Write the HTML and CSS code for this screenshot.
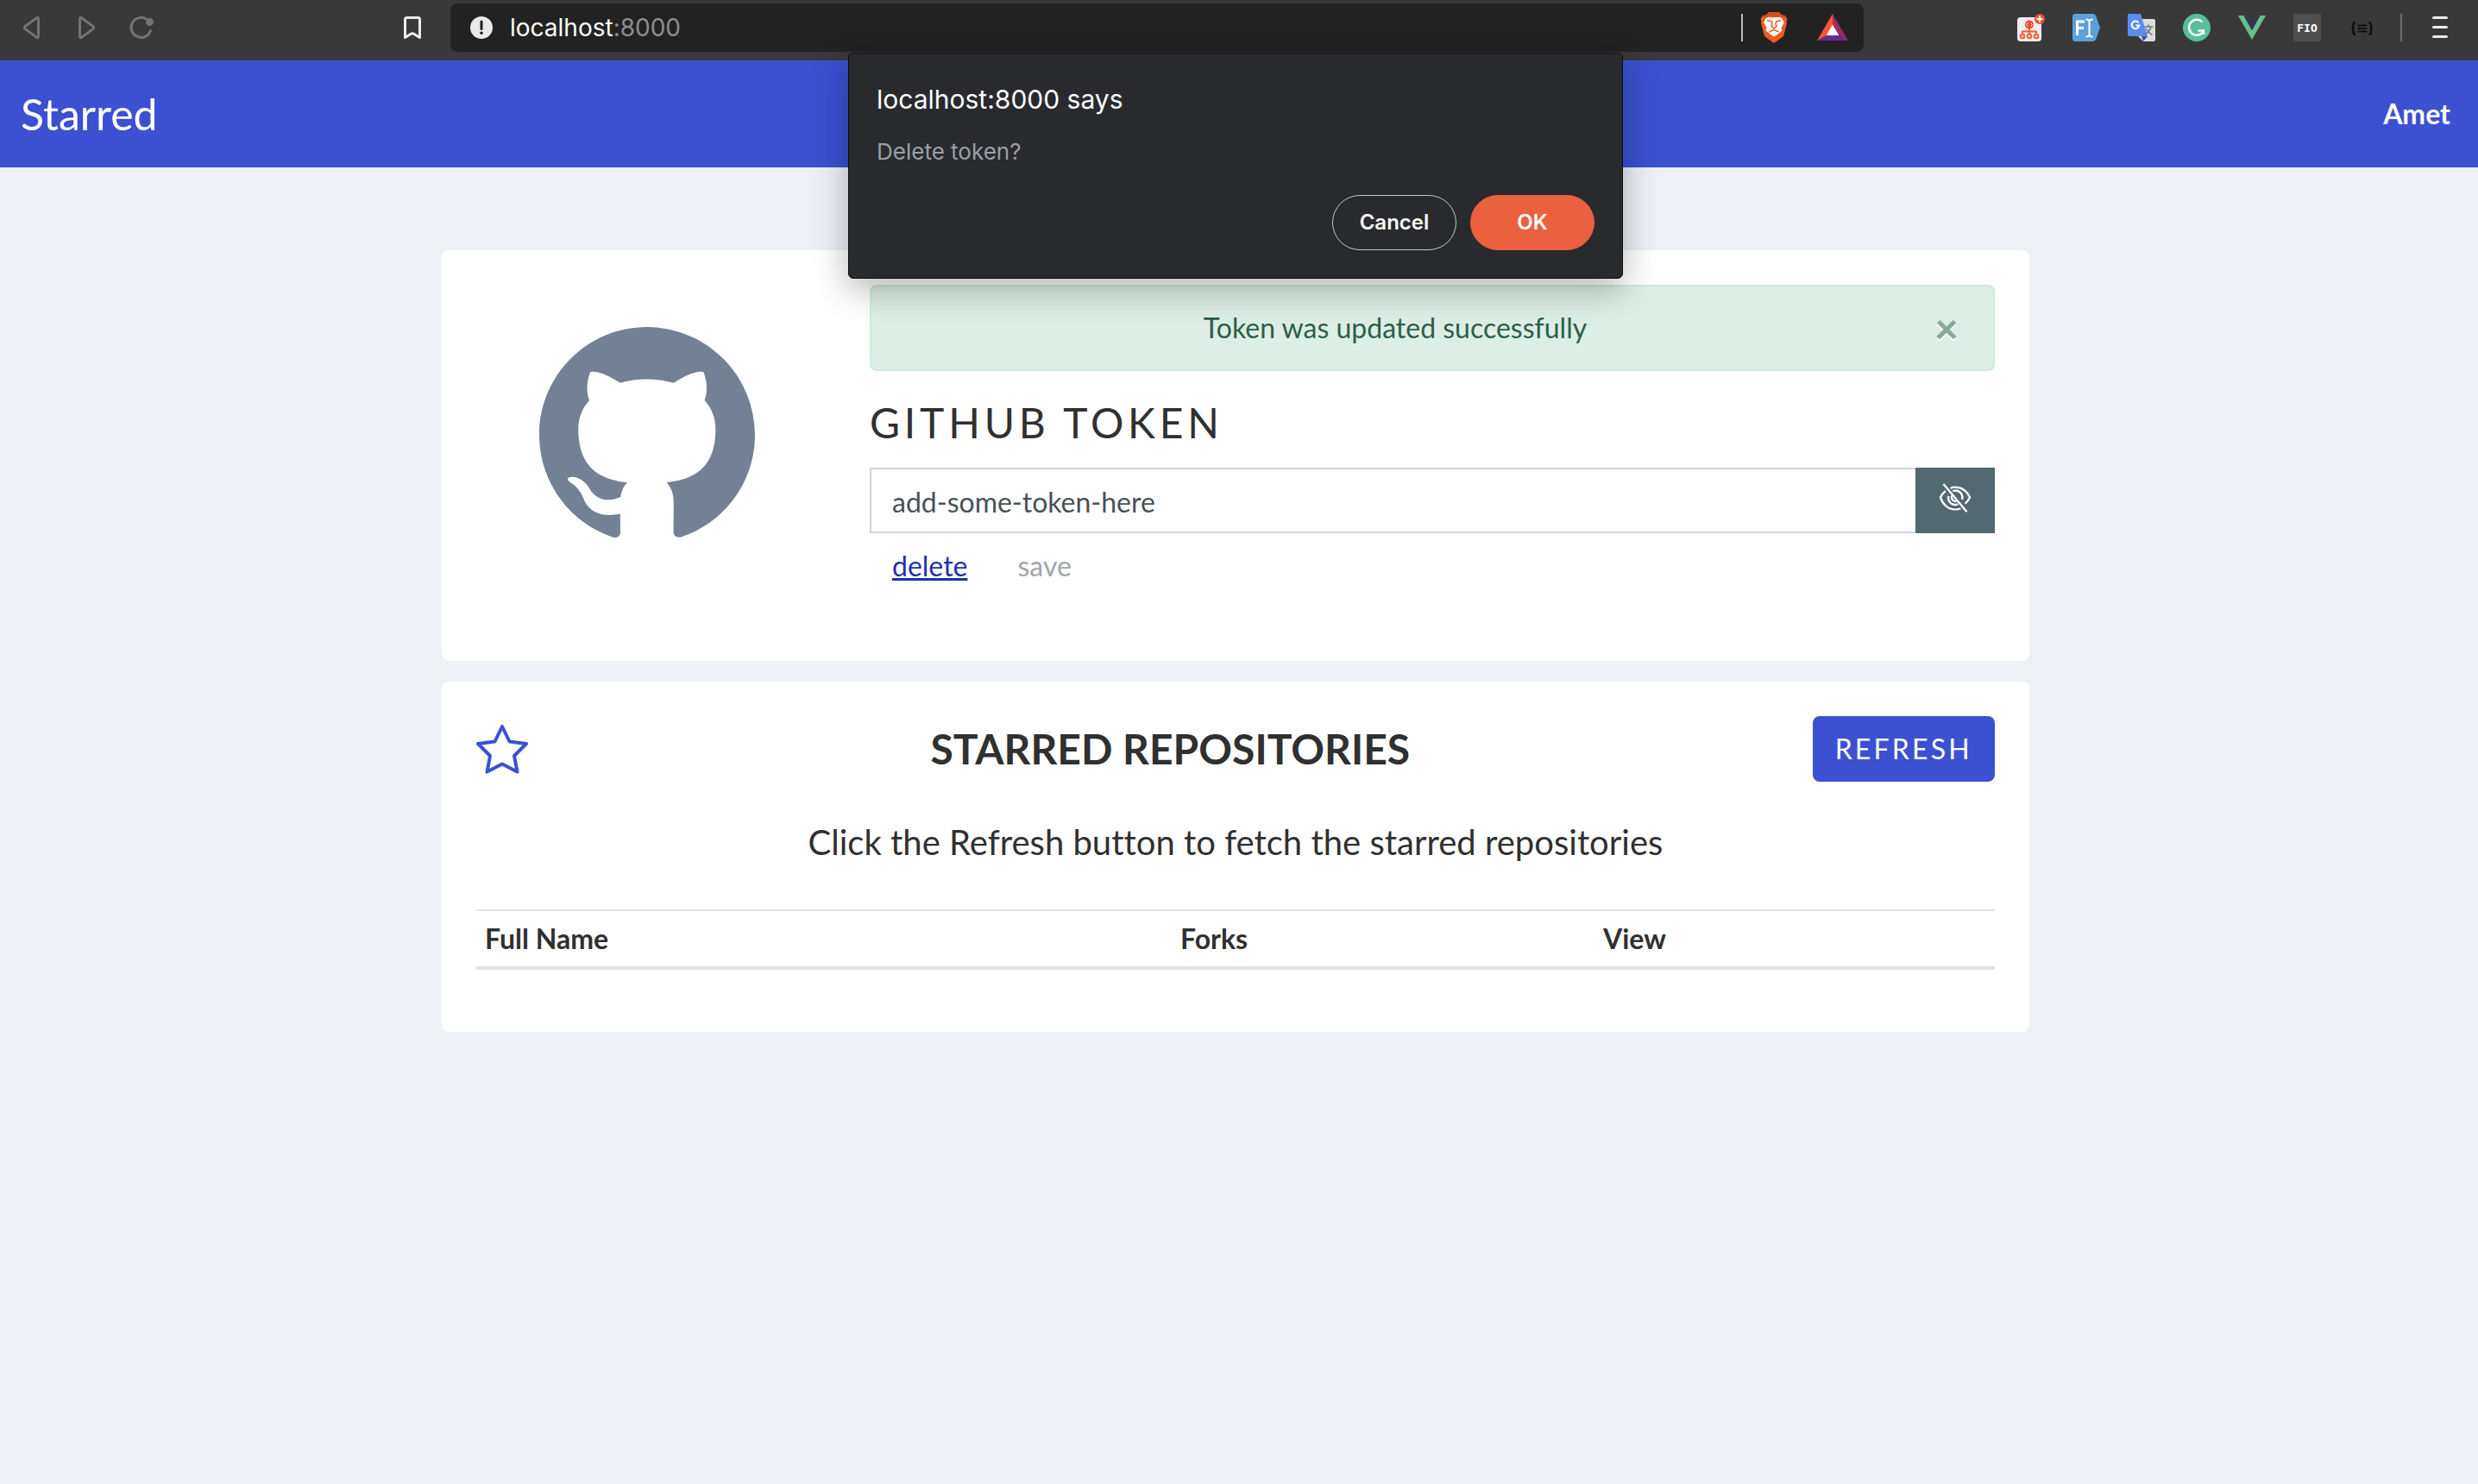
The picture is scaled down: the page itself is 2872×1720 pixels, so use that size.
FILE: index.html
```html
<!DOCTYPE html>
<html lang="en">
<head>
<meta charset="utf-8">
<title>Starred</title>
<link rel="stylesheet" href="styles.css">
</head>
<body>
<div class="toolbar">
  <div class="toolbar-left">
    <div class="nav-buttons">
      <button class="icon-btn dim" type="button" aria-label="Back"><svg viewBox="0 0 32 32"><path d="M21.800 5.200Q24.500 3.200 24.500 6V26Q24.500 28.800 22.300 27.200L9.300 17.600Q7.500 16 9.300 14.400Z"/></svg></button>
      <button class="icon-btn dim" type="button" aria-label="Forward"><svg viewBox="0 0 32 32"><path d="M11.200 5.200Q8.500 3.200 8.500 6V26Q8.500 28.800 10.700 27.200L23.700 17.600Q25.500 16 23.700 14.400Z"/></svg></button>
      <button class="icon-btn dim" type="button" aria-label="Reload"><svg viewBox="0 0 32 32"><path d="M26.500 19.500A11.500 11.500 0 1 1 21.500 6"/><circle cx="25.500" cy="9.500" r="4.500" fill="#737373" stroke="none"/></svg></button>
    </div>
    <button class="icon-btn" type="button" aria-label="Bookmark"><svg viewBox="0 0 32 32"><path d="M7.500 6.500Q7.500 4.500 9.500 4.500H22.500Q24.500 4.500 24.500 6.500V27.500L18 23.500Q16 22 14 23.500L7.500 27.500Z"/></svg></button>
  </div>
  <div class="address">
    <svg class="info" viewBox="0 0 26 26"><circle cx="13" cy="13" r="13" fill="#e9e9e9"/><path d="M13 6V14.500" stroke="#222" stroke-width="3" stroke-linecap="round"/><circle cx="13" cy="19.300" r="1.800" fill="#222"/></svg>
    <span class="url">localhost<span class="port">:8000</span></span>
    <span class="divider light"></span>
    <svg class="brave" viewBox="0 0 32 36"><path d="M10 0H22L25 3.500L29 4L31.500 8L30.500 11L31 13L27 28L16 36L5 28L1 13L1.500 11L.5 8L3 4L7 3.500Z" fill="#f15a24"/><path d="M10 0H22L25 3.500L29 4L30.500 7L22 5.500H10L1.500 7L3 4L7 3.500Z" fill="#d4501f"/><path d="M16 6.500L22 5.800L25 7L28 12L24.500 18L25.300 21.500L20.500 25.500L16 28.500L11.500 25.500L6.700 21.500L7.500 18L4 12L7 7L10 5.800Z" fill="#fff"/><path d="M8 9.500L13.500 11L14 14L13 16.500L16 18.500L19 16.500L18 14L18.500 11L24 9.500M16 18.500V20.500M10.500 23L16 20.500L21.500 23" fill="none" stroke="#e8592a" stroke-width="1.500"/></svg>
    <svg class="bat" viewBox="0 0 36 32"><path d="M18 0L0 31L11 25L18 13Z" fill="#ff5534"/><path d="M18 0L36 31L25 25L18 13Z" fill="#9e2a63"/><path d="M0 31H36L25 25H11Z" fill="#662d91"/><path d="M18 12.500L25.300 25H10.700Z" fill="#fff"/></svg>
  </div>
  <div class="extensions">
    <svg viewBox="0 0 32 32"><rect y="4" width="28" height="28" rx="4" fill="#eee"/><g fill="none" stroke="#ee6235" stroke-width="2"><path d="M14 16V24M6 24V20.500H22V24"/><circle cx="6" cy="26" r="2.300"/><circle cx="14" cy="26" r="2.300"/><circle cx="22" cy="26" r="2.300"/></g><circle cx="14" cy="12.500" r="5" fill="#e8492f"/><path d="M12.500 10.500L10.500 12.500L12.500 14.500M15.500 10.500L17.500 12.500L15.500 14.500" fill="none" stroke="#fff"/><circle cx="26" cy="6" r="6" fill="#ea5434"/><path d="M26 2.500V9.500M22.500 6H29.500" stroke="#fff" stroke-width="2.200"/></svg>
    <svg viewBox="0 0 32 32"><path d="M3 0H23Q26 0 27 2L32 16L27 30Q26 32 23 32H3Q0 32 0 29V3Q0 0 3 0Z" fill="#5aa2dd"/><path d="M5.500 25V9H14M5.500 16.500H13" fill="none" stroke="#fff" stroke-width="3"/><path d="M15.500 6.500Q19.500 6.500 19.500 9V24Q19.500 26.500 15.500 26.500M23.500 6.500Q19.500 6.500 19.500 9M19.500 24Q19.500 26.500 23.500 26.500" fill="none" stroke="#fff" stroke-width="2"/></svg>
    <svg viewBox="0 0 32 32"><path d="M10 6H30Q32 6 32 8V30Q32 32 30 32H18L10 24Z" fill="#dcdcdc"/><path d="M16 26H23L18 32Z" fill="#3a4fb8"/><path d="M2 0H15L23 26H2Q0 26 0 24V2Q0 0 2 0Z" fill="#5b8def"/><path d="M12.500 10.300A4.300 4.300 0 1 0 13.300 13.500H9.500" fill="none" stroke="#fff" stroke-width="2"/><path d="M19.500 15H29.500M24 12.500V15M27 15Q25.500 21 19.500 24M21.500 17Q23 21 28.500 24.500" fill="none" stroke="#5f7d8c" stroke-width="1.600"/></svg>
    <svg viewBox="0 0 32 32"><circle cx="16" cy="16" r="16" fill="#57c09b"/><path d="M22.500 9.500A9 9 0 1 0 24 20M17.500 19.500H24V24" fill="none" stroke="#fff" stroke-width="2.500"/></svg>
    <svg viewBox="0 0 32 32"><path d="M0 2H6.500L16 19L25.500 2H32L16 30Z" fill="#65c08d"/><path d="M6.500 2H12L16 9L20 2H25.500L16 19Z" fill="#333852"/></svg>
    <svg viewBox="0 0 32 32"><rect width="32" height="32" fill="#4f4f4f"/><text class="fio" x="16" y="21" text-anchor="middle">FIO</text></svg>
    <svg viewBox="0 0 32 32"><g fill="none" stroke="#0c0c0c" stroke-width="2.200"><path d="M8 10Q5.500 10 5.500 12.500V15Q5.500 17 3.500 17Q5.500 17 5.500 19V21.500Q5.500 24 8 24M23.500 10Q26 10 26 12.500V15Q26 17 28 17Q26 17 26 19V21.500Q26 24 23.500 24"/><path d="M10.500 13.500H21.500M10.500 17H21.500M10.500 20.500H21.500M18 12V15M13 15.500V18.500M17 19V22" stroke-width="1.500"/></g></svg>
    <span class="divider"></span>
    <button class="icon-btn" type="button" aria-label="Menu"><svg viewBox="0 0 32 32"><path d="M8.500 4.500H23.500M8.500 15.500H23.500M8.500 26.500H23.500"/></svg></button>
  </div>
</div>

<header class="site-header">
  <a class="brand" href="#">Starred</a>
  <a class="user" href="#">Amet</a>
</header>

<main class="page">
  <section class="card token-card">
    <div class="logo-col">
      <svg class="github" viewBox="0 0 24 24" aria-label="GitHub"><path fill="#748194" d="M12 .297c-6.630 0-12 5.373-12 12 0 5.303 3.438 9.800 8.205 11.385.6.113.82-.258.82-.577 0-.285-.01-1.040-.015-2.040-3.338.724-4.042-1.610-4.042-1.610C4.422 18.070 3.633 17.700 3.633 17.700c-1.087-.744.084-.729.084-.729 1.205.084 1.838 1.236 1.838 1.236 1.070 1.835 2.809 1.305 3.495.998.108-.776.417-1.305.76-1.605-2.665-.3-5.466-1.332-5.466-5.930 0-1.310.465-2.380 1.235-3.220-.135-.303-.54-1.523.105-3.176 0 0 1.005-.322 3.300 1.230.96-.267 1.980-.399 3-.405 1.020.006 2.040.138 3 .405 2.280-1.552 3.285-1.230 3.285-1.230.645 1.653.24 2.873.12 3.176.765.84 1.230 1.910 1.230 3.220 0 4.610-2.805 5.625-5.475 5.920.42.36.81 1.096.81 2.220 0 1.606-.015 2.896-.015 3.286 0 .315.21.69.825.57C20.565 22.092 24 17.592 24 12.297c0-6.627-5.373-12-12-12"/></svg>
    </div>
    <div class="token-col">
      <div class="alert" role="alert">
        <span class="alert-text">Token was updated successfully</span>
        <button class="close" type="button" aria-label="Close">×</button>
      </div>
      <h2 class="token-title"><label for="token">GITHUB TOKEN</label></h2>
      <div class="input-group">
        <input class="token-input" id="token" type="text" value="add-some-token-here">
        <button class="toggle" type="button" aria-label="Hide token"><svg viewBox="0 0 40 40"><g fill="none" stroke="#fff" stroke-width="2.600"><path d="M14 5Q17 3.500 20 3.500C29 3.500 36 10 39 18Q37 23 33 27M27 34Q24 35.500 20 35.500C11 35.500 4 28 1 18Q3 13 7.500 9" transform="translate(0 2) scale(1 .9)"/><path d="M17 10Q19 9.500 20 9.500A9 9 0 0 1 29 21M23.500 27Q22 28 20 28A9 9 0 0 1 11.500 16.500M16 16A5 5 0 0 0 22 23"/><path d="M5 1L35 37"/></g></svg></button>
      </div>
      <div class="actions">
        <a class="btn-link" href="#">delete</a>
        <button class="btn-link" type="button" disabled>save</button>
      </div>
    </div>
  </section>

  <section class="card">
    <div class="repo-head">
      <svg class="star" viewBox="0 0 60 60" aria-hidden="true"><path d="M30 4L38.500 21.500L58 24L44 38L47.500 56.500L30 47.500L12.500 56.500L16 38L2 24L21.500 21.500Z"/></svg>
      <h2 class="repo-title">STARRED REPOSITORIES</h2>
      <button class="refresh" type="button">REFRESH</button>
    </div>
    <p class="hint">Click the Refresh button to fetch the starred repositories</p>
    <table class="repos">
      <thead>
        <tr><th scope="col">Full Name</th><th class="forks" scope="col">Forks</th><th class="view" scope="col">View</th></tr>
      </thead>
    </table>
  </section>
</main>

<div class="dialog" role="dialog" aria-labelledby="dialog-title">
  <h1 class="dialog-title" id="dialog-title">localhost:8000 says</h1>
  <p class="dialog-text">Delete token?</p>
  <div class="dialog-actions">
    <button class="pill" type="button">Cancel</button>
    <button class="pill primary" type="button">OK</button>
  </div>
</div>
</body>
</html>
```
FILE: styles.css
```css
* { box-sizing: border-box; }

body {
  margin: 0;
  min-height: 100vh;
  background: #edf1f6;
  color: #303030;
  font: 32px/48px Lato, sans-serif;
  font-variant-ligatures: none;
}

h1, h2, p { margin: 0; font-weight: 400; }
button, input { margin: 0; font: inherit; }
button { border: 0; padding: 0; background: none; color: inherit; }
a { color: inherit; text-decoration: none; }
svg { display: block; flex: none; }

/* Browser toolbar */
.toolbar {
  display: grid;
  grid-template-columns: 494px 1fr 506px;
  column-gap: 28px;
  align-items: center;
  height: 70px;
  padding: 0 28px 6px 0;
  background: #393939;
}
.toolbar-left {
  display: flex;
  justify-content: space-between;
  padding-left: 20px;
}
.nav-buttons { display: flex; gap: 32px; }
.icon-btn { width: 32px; height: 32px; }
.icon-btn svg {
  width: 32px;
  height: 32px;
  fill: none;
  stroke: #ececec;
  stroke-width: 3;
  stroke-linecap: round;
  stroke-linejoin: round;
}
.icon-btn.dim svg { stroke: #737373; }
.address {
  display: flex;
  align-items: center;
  height: 56px;
  margin-right: 150px;
  padding: 0 18px 0 23px;
  border-radius: 8px;
  background: #222;
}
.info { width: 26px; height: 26px; }
.url {
  flex: 1;
  margin-left: 20px;
  color: #fff;
  font: 28px/40px Inter, sans-serif;
}
.port { color: #8e8e8e; }
.divider { width: 2px; height: 32px; margin: 0 -4px; background: #6e6e6e; }
.divider.light { margin: 0; background: #b9b9b9; }
.brave { width: 32px; height: 36px; margin-left: 20px; }
.bat { width: 36px; height: 32px; margin-left: 34px; }
.extensions {
  display: flex;
  align-items: center;
  gap: 32px;
}
.extensions > svg { width: 32px; height: 32px; }
.fio { font: bold 13px "DejaVu Sans Mono", monospace; fill: #fff; }

/* Site header */
.site-header {
  display: flex;
  align-items: center;
  justify-content: space-between;
  height: 124px;
  padding: 0 32px 0 24px;
  background: #3b51d1;
  color: #fff;
}
.brand { font-size: 50px; }
.user { font-weight: 700; }

/* Cards */
.page {
  display: flex;
  flex-direction: column;
  gap: 24px;
  max-width: 1848px;
  margin: 96px auto 0;
  padding-right: 8px;
}
.card {
  padding: 40px;
  border-radius: 8px;
  background: #fff;
}
.token-card {
  display: grid;
  grid-template-columns: 396px 1fr;
  column-gap: 60px;
}
.logo-col { display: flex; justify-content: center; padding-top: 46px; }
.github { width: 250px; height: 250px; }

.alert {
  display: flex;
  align-items: center;
  height: 100px;
  margin-bottom: 32px;
  padding-left: 22px;
  border: 2px solid #d0e9dc;
  border-radius: 8px;
  background: #ddeee6;
  color: #2d5f49;
}
.alert-text { flex: 1; text-align: center; }
.close {
  width: 108px;
  color: #8aa899;
  font-size: 48px;
  font-weight: 900;
  text-shadow: 0 2px 0 #fff;
}
.token-title {
  margin-bottom: 24px;
  font-size: 48px;
  line-height: 56px;
  letter-spacing: .1em;
}
.input-group { display: flex; height: 76px; }
.token-input {
  flex: 1;
  min-width: 0;
  padding: 4px 24px 0;
  border: 2px solid #cdd3da;
  border-right: 0;
  border-radius: 0;
  outline: 0;
  background: #fff;
  color: #4a5058;
}
.toggle {
  display: flex;
  align-items: flex-start;
  justify-content: center;
  width: 92px;
  padding-top: 18px;
  background: #546872;
}
.toggle svg { width: 40px; height: 36px; }
.actions { display: flex; gap: 6px; padding-bottom: 32px; }
.btn-link { padding: 14px 26px; color: #1d32a8; text-decoration: underline; }
.btn-link:disabled { color: #a0a5aa; text-decoration: none; }

.repo-head {
  display: flex;
  align-items: center;
  justify-content: space-between;
}
.star { width: 60px; height: 60px; fill: none; stroke: #3b51d1; stroke-width: 4; stroke-linejoin: round; }
.repo-title { font-size: 48px; line-height: 56px; font-weight: 700; }
.refresh {
  padding: 14px 26px;
  border-radius: 8px;
  background: #3b51d1;
  color: #fff;
  letter-spacing: .1em;
}
.hint {
  margin: 40px 0 48px;
  font-size: 40px;
  line-height: 60px;
  text-align: center;
}
.repos {
  width: 100%;
  margin-bottom: 32px;
  border-spacing: 0;
}
.repos th {
  padding: 8px 10px;
  border-top: 2px solid #dee2e6;
  border-bottom: 4px solid #dee2e6;
  text-align: left;
}
.forks { width: 490px; }
.view { width: 464px; }

/* Confirmation dialog */
.dialog {
  position: absolute;
  top: 61px;
  left: 0;
  right: 8px;
  width: 898px;
  margin: 0 auto;
  padding: 32px;
  border: 1px solid #0c0c0c;
  border-radius: 6px;
  background: #292a2e;
  box-shadow: 0 12px 40px rgba(0, 0, 0, .3);
  font-family: Inter, sans-serif;
}
.dialog-title { color: #fff; font-size: 30px; line-height: 42px; }
.dialog-text { margin-top: 22px; color: #9aa0a6; font-size: 26px; line-height: 36px; }
.dialog-actions {
  display: flex;
  justify-content: flex-end;
  gap: 16px;
  margin-top: 32px;
}
.pill {
  width: 144px;
  height: 64px;
  border: 1px solid #c5c8cc;
  border-radius: 32px;
  color: #fff;
  font-size: 24px;
  font-weight: 600;
}
.pill.primary { border-color: #eb613f; background: #eb613f; }
```
